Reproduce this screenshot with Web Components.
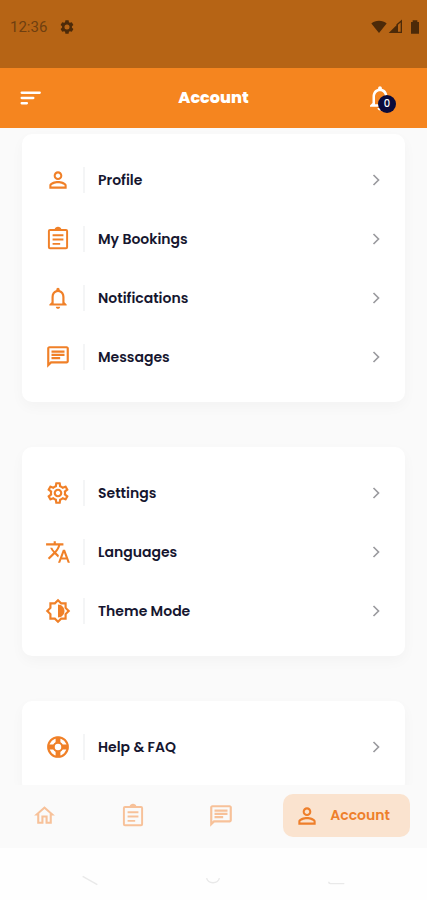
<!DOCTYPE html>
<html lang="en">
<head>
<meta charset="utf-8">
<meta name="viewport" content="width=device-width, initial-scale=1">
<title>Account</title>
<style>
  html, body { margin: 0; height: 100%; }
  body {
    --brand: #f5851f;
    --ink: #16162f;
    --surface: #ffffff;
    --page: #fafafa;
    font-family: Poppins, Inter, "Liberation Sans", sans-serif;
    color: var(--ink);
    background: var(--page);
  }
</style>
</head>
<body>
<account-screen></account-screen>

<script>
const ICONS = {
  person: '<path d="M12 5.9c1.16 0 2.1.94 2.1 2.1s-.94 2.1-2.1 2.1S9.9 9.16 9.9 8s.94-2.1 2.1-2.1m0 9c2.97 0 6.1 1.46 6.1 2.1v1.1H5.9V17c0-.64 3.13-2.1 6.1-2.1M12 4C9.79 4 8 5.79 8 8s1.79 4 4 4 4-1.79 4-4-1.79-4-4-4zm0 9c-2.67 0-8 1.34-8 4v3h16v-3c0-2.66-5.33-4-8-4z"/>',
  clipboard: '<g fill="none" stroke="currentColor" stroke-width="1.8"><rect x="3.6" y="3.6" width="16.8" height="17" rx="1"/><path d="M7 8.5h10M7 12.5h10M7 16.5h7"/></g><path d="M8.800 3.200a3.300 3.300 0 0 1 6.400 0v1H8.800z"/>',
  bell: '<path d="M12 22c1.1 0 2-.9 2-2h-4c0 1.1.89 2 2 2zm6-6v-5c0-3.07-1.64-5.64-4.5-6.32V4c0-.83-.67-1.5-1.5-1.5s-1.5.67-1.5 1.5v.68C7.63 5.36 6 7.92 6 11v5l-2 2v1h16v-1l-2-2zm-2 1H8v-6c0-2.48 1.51-4.5 4-4.5s4 2.02 4 4.5v6z"/>',
  chat: '<path d="M4 4h16v12H5.17L4 17.17V4m0-2c-1.1 0-1.99.9-1.99 2L2 22l4-4h14c1.1 0 2-.9 2-2V4c0-1.1-.9-2-2-2H4zm2 10h8v2H6v-2zm0-3h12v2H6V9zm0-3h12v2H6V6z"/>',
  home: '<path d="M12 5.69l5 4.5V18h-2v-6H9v6H7v-7.81l5-4.5M12 3L2 12h3v8h6v-6h2v6h6v-8h3L12 3z"/>',
  translate: '<path d="M12.87 15.07l-2.54-2.51.03-.03c1.74-1.94 2.98-4.17 3.71-6.53H17V4h-7V2H8v2H1v1.99h11.17C11.5 7.92 10.44 9.75 9 11.35 8.07 10.32 7.3 9.19 6.69 8h-2c.73 1.63 1.73 3.17 2.98 4.56l-5.09 5.02L4 19l5-5 3.11 3.11.76-2.04zM18.5 10h-2L12 22h2l1.12-3h4.75L21 22h2l-4.5-12zm-2.62 7l1.62-4.33L19.12 17h-3.24z"/>',
  brightness: '<path d="M20 15.31L23.31 12 20 8.69V4h-4.69L12 .69 8.69 4H4v4.69L.69 12 4 15.31V20h4.69L12 23.31 15.31 20H20v-4.69zM18 14.48V18h-3.52L12 20.48 9.52 18H6v-3.52L3.52 12 6 9.52V6h3.52L12 3.52 14.48 6H18v3.52L20.48 12 18 14.48zM12 6v12c3.31 0 6-2.69 6-6s-2.69-6-6-6z"/>',
  settings: '<path d="M19.43 12.98c.04-.32.07-.64.07-.98 0-.34-.03-.66-.07-.98l2.11-1.65c.19-.15.24-.42.12-.64l-2-3.46c-.09-.16-.26-.25-.44-.25-.06 0-.12.01-.17.03l-2.49 1c-.52-.4-1.08-.73-1.69-.98l-.38-2.65C14.46 2.18 14.25 2 14 2h-4c-.25 0-.46.18-.49.42l-.38 2.65c-.61.25-1.17.59-1.69.98l-2.49-1c-.06-.02-.12-.03-.18-.03-.17 0-.34.09-.43.25l-2 3.46c-.13.22-.07.49.12.64l2.11 1.65c-.04.32-.07.65-.07.98 0 .33.03.66.07.98l-2.11 1.65c-.19.15-.24.42-.12.64l2 3.46c.09.16.26.25.44.25.06 0 .12-.01.17-.03l2.49-1c.52.4 1.08.73 1.69.98l.38 2.65c.03.24.24.42.49.42h4c.25 0 .46-.18.49-.42l.38-2.65c.61-.25 1.17-.59 1.69-.98l2.49 1c.06.02.12.03.18.03.17 0 .34-.09.43-.25l2-3.46c.12-.22.07-.49-.12-.64l-2.11-1.65zm-1.98-1.71c.04.31.05.52.05.73 0 .21-.02.43-.05.73l-.14 1.13.89.7 1.08.84-.7 1.21-1.27-.51-1.04-.42-.9.68c-.43.32-.84.56-1.25.73l-1.06.43-.16 1.13-.2 1.35h-1.4l-.19-1.35-.16-1.13-1.06-.43c-.43-.18-.83-.41-1.23-.71l-.91-.7-1.06.43-1.27.51-.7-1.21 1.08-.84.89-.7-.14-1.13c-.03-.31-.05-.54-.05-.74s.02-.43.05-.73l.14-1.13-.89-.7-1.08-.84.7-1.21 1.27.51 1.04.42.9-.68c.43-.32.84-.56 1.25-.73l1.06-.43.16-1.13.2-1.35h1.39l.19 1.35.16 1.13 1.06.43c.43.18.83.41 1.23.71l.91.7 1.06-.43 1.27-.51.7 1.21-1.07.85-.89.7.14 1.13zM12 8c-2.21 0-4 1.79-4 4s1.79 4 4 4 4-1.79 4-4-1.79-4-4-4zm0 6c-1.1 0-2-.9-2-2s.9-2 2-2 2 .9 2 2-.9 2-2 2z"/>',
  gear: '<path fill-rule="evenodd" d="M9.6 2h4.8l.5 2.9 1.5.9 2.8-1 2.4 4.1-2.2 1.9v2.4l2.2 1.9-2.4 4.1-2.8-1-1.5.9-.5 2.9H9.6l-.5-2.9-1.5-.9-2.8 1-2.4-4.1 2.2-1.9v-2.4L2.4 8.9l2.4-4.1 2.8 1 1.500-.9zM12 8.200a3.800 3.800 0 1 0 0 7.600 3.800 3.800 0 0 0 0-7.600z"/>',
  support: '<g fill="none" stroke="currentColor"><circle cx="12" cy="12" r="9" stroke-width="2"/><circle cx="12" cy="12" r="4" stroke-width="2"/><path stroke-width="4.4" d="M12 2.5V8M12 16v5.5M2.5 12H8M16 12h5.5"/></g>',
  chevron: '<path fill="none" stroke="currentColor" stroke-width="2" d="M9 6l6 6-6 6"/>',
  menu: '<path fill="none" stroke="currentColor" stroke-width="2" stroke-linecap="round" d="M4 7.5h15.5M4 12h10M4 16.5h4.5"/>',
  wifi: '<path d="M12 21L.5 6.800C3.500 4.200 7.500 2.800 12 2.800s8.500 1.400 11.500 4z"/>',
  signal: '<path d="M1 21L15 7v14z"/><path fill="none" stroke="currentColor" stroke-width="2" d="M13 9l7-6v17h-7"/>',
  battery: '<path d="M8.500 2h7v2.500H18V22H6V4.500h2.500z"/>',
  back: '<path fill="none" stroke="currentColor" stroke-width="1.5" d="M4 8l16 9"/>',
  circle: '<path fill="none" stroke="currentColor" stroke-width="1.5" d="M5 10c1 4 4 5 7 5s6-1 7-5"/>',
  recent: '<path fill="none" stroke="currentColor" stroke-width="1.5" d="M3 14q0 2 2 2h15"/>'
};

function define(name, html, setup) {
  const template = document.createElement('template');
  template.innerHTML = html;
  customElements.define(name, class extends HTMLElement {
    constructor() {
      super();
      this.attachShadow({ mode: 'open' }).append(template.content.cloneNode(true));
    }
    connectedCallback() { if (setup) setup(this, this.shadowRoot); }
  });
}

define('ui-icon', `
  <style>
    :host { display: block; flex: none; width: var(--size, 26px); height: var(--size, 26px); }
    svg { display: block; width: 100%; height: 100%; fill: currentColor; }
  </style>
  <svg viewBox="0 0 24 24" aria-hidden="true"></svg>`,
  (host, root) => { root.querySelector('svg').innerHTML = ICONS[host.getAttribute('name')]; });

define('status-bar', `
  <style>
    :host { display: flex; align-items: center; height: 68px; box-sizing: border-box; padding: 0 4px 14px 10px;
      background: #b66415; color: #4c2a09; font: 15px/20px Roboto, sans-serif; }
    time { color: #6f3f10; margin-right: 12px; }
    ui-icon { --size: 16px; }
    .gap { flex: 1; }
    .battery { margin-left: 3px; }
    .signal { margin-left: 1px; }
  </style>
  <time>12:36</time><ui-icon name="gear"></ui-icon><span class="gap"></span>
  <ui-icon name="wifi"></ui-icon><ui-icon class="signal" name="signal"></ui-icon><ui-icon class="battery" name="battery"></ui-icon>`);

define('app-header', `
  <style>
    :host { display: grid; grid-template-columns: 1fr auto 1fr; align-items: center; height: 60px;
      padding: 0 32px 0 17px; background: var(--brand); color: #fff; }
    h1 { margin: 0; padding-left: 15px; font-size: 16px; line-height: 24px; font-weight: 800; }
    button { position: relative; display: block; padding: 0; border: 0; background: none; color: inherit; font: inherit; cursor: pointer; }
    button:last-child { justify-self: end; --size: 30px; }
    ui-icon { width: var(--size, 28px); height: var(--size, 28px); }
    button:first-child { --size: 28px; }
    .badge { position: absolute; right: -1px; bottom: 0; width: 18px; height: 18px; border-radius: 50%;
      background: #0b0b3b; font-size: 10px; line-height: 18px; font-weight: 500; text-align: center; }
  </style>
  <button type="button" aria-label="Menu"><ui-icon name="menu"></ui-icon></button>
  <h1><slot></slot></h1>
  <button type="button" aria-label="Notifications"><ui-icon name="bell"></ui-icon><span class="badge">0</span></button>`);

define('menu-card', `
  <style>
    :host { display: block; padding: 16px 0; border-radius: 10px; background: var(--surface);
      box-shadow: 0 5px 14px rgba(0, 0, 0, .03); }
  </style>
  <slot></slot>`);

define('menu-row', `
  <style>
    :host { display: block; }
    a { display: flex; align-items: center; height: 59px; padding: 0 19px 0 23px; color: inherit; text-decoration: none; }
    ui-icon { color: #f08028; }
    .label { flex: 1; margin-left: 12px; padding-left: 13px; border-left: 2px solid #f4f5f6;
      font-size: 14px; line-height: 26px; font-weight: 600; }
    .chevron { --size: 20px; color: #9a9a9e; }
  </style>
  <a href="#"><ui-icon class="lead"></ui-icon><span class="label"><slot></slot></span><ui-icon class="chevron" name="chevron"></ui-icon></a>`,
  (host, root) => {
    const old = root.querySelector('.lead');
    const icon = document.createElement('ui-icon');
    icon.setAttribute('name', host.getAttribute('icon'));
    old.replaceWith(icon);
  });

define('tab-bar', `
  <style>
    :host { display: block; background: #fafafa; }
    nav { display: grid; grid-template-columns: 1fr 1fr 1fr auto; align-items: center; justify-items: center;
      height: 61px; padding: 0 17px 2px 0; }
    a { display: flex; color: #f7c199; text-decoration: none; }
    .home { --size: 25px; }
    .active { align-items: center; gap: 10px; height: 43px; margin-left: 18px; padding: 0 20px 0 11px; border-radius: 10px;
      background: #fae3cf; color: #ee7f2b; font-size: 14px; font-weight: 600; }
  </style>
  <nav aria-label="Main">
    <a href="#" aria-label="Home"><ui-icon class="home" name="home"></ui-icon></a>
    <a href="#" aria-label="Bookings"><ui-icon name="clipboard"></ui-icon></a>
    <a href="#" aria-label="Messages"><ui-icon name="chat"></ui-icon></a>
    <a class="active" href="#" aria-current="page"><ui-icon name="person"></ui-icon>Account</a>
  </nav>`);

define('system-bar', `
  <style>
    :host { display: flex; justify-content: space-around; align-items: center; height: 52px;
      padding: 12px 28px 0; box-sizing: border-box; background: #fefefe; color: #e9e9e9; }
    ui-icon { --size: 22px; }
  </style>
  <ui-icon name="back"></ui-icon><ui-icon name="circle"></ui-icon><ui-icon name="recent"></ui-icon>`);

define('account-screen', `
  <style>
    :host { display: flex; flex-direction: column; height: 100vh; background: var(--page); }
    status-bar, app-header, tab-bar, system-bar { flex: none; }
    main { flex: 1; min-height: 0; overflow-y: auto; scrollbar-width: none; }
    .cards { display: grid; gap: 45px; padding: 6px 22px; }
  </style>
  <status-bar></status-bar>
  <app-header>Account</app-header>
  <main><div class="cards">
    <menu-card>
      <menu-row icon="person">Profile</menu-row>
      <menu-row icon="clipboard">My Bookings</menu-row>
      <menu-row icon="bell">Notifications</menu-row>
      <menu-row icon="chat">Messages</menu-row>
    </menu-card>
    <menu-card>
      <menu-row icon="settings">Settings</menu-row>
      <menu-row icon="translate">Languages</menu-row>
      <menu-row icon="brightness">Theme Mode</menu-row>
    </menu-card>
    <menu-card>
      <menu-row icon="support">Help &amp; FAQ</menu-row>
    </menu-card>
  </div></main>
  <tab-bar></tab-bar>
  <system-bar></system-bar>`);
</script>
</body>
</html>
